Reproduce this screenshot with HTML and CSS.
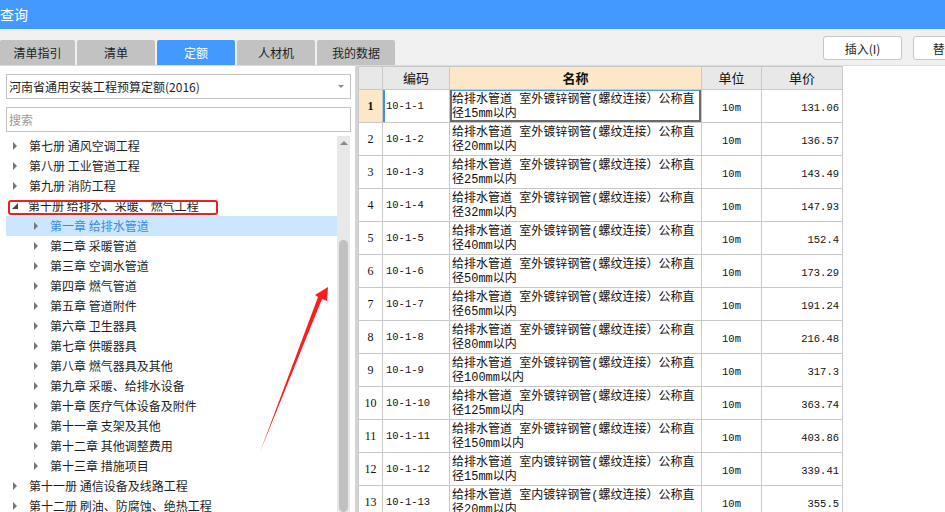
FILE: index.html
```html
<!DOCTYPE html>
<html lang="zh-CN">
<head>
<meta charset="utf-8">
<title>查询</title>
<link rel="stylesheet" href="styles.css">
</head>
<body>
<div class="app">
  <div class="titlebar">查询</div>
  <div class="toolbar">
    <div class="tabs">
      <div class="tab tab-first">清单指引</div>
      <div class="tab">清单</div>
      <div class="tab active">定额</div>
      <div class="tab">人材机</div>
      <div class="tab">我的数据</div>
    </div>
    <div class="actions">
      <button class="btn">插入(I)</button>
      <button class="btn">替换(R)</button>
    </div>
  </div>
  <div class="main">
    <div class="left">
      <div class="select">河南省通用安装工程预算定额(2016)<span class="caret"></span></div>
      <div class="search">搜索</div>
      <div class="treewrap">
        <ul class="tree">
          <li class="node"><span class="tri"></span>第七册 通风空调工程</li>
          <li class="node"><span class="tri"></span>第八册 工业管道工程</li>
          <li class="node"><span class="tri"></span>第九册 消防工程</li>
          <li class="node"><span class="tri open"></span>第十册 给排水、采暖、燃气工程</li>
          <li class="node sub selected"><span class="tri"></span>第一章 给排水管道</li>
          <li class="node sub"><span class="tri"></span>第二章 采暖管道</li>
          <li class="node sub"><span class="tri"></span>第三章 空调水管道</li>
          <li class="node sub"><span class="tri"></span>第四章 燃气管道</li>
          <li class="node sub"><span class="tri"></span>第五章 管道附件</li>
          <li class="node sub"><span class="tri"></span>第六章 卫生器具</li>
          <li class="node sub"><span class="tri"></span>第七章 供暖器具</li>
          <li class="node sub"><span class="tri"></span>第八章 燃气器具及其他</li>
          <li class="node sub"><span class="tri"></span>第九章 采暖、给排水设备</li>
          <li class="node sub"><span class="tri"></span>第十章 医疗气体设备及附件</li>
          <li class="node sub"><span class="tri"></span>第十一章 支架及其他</li>
          <li class="node sub"><span class="tri"></span>第十二章 其他调整费用</li>
          <li class="node sub"><span class="tri"></span>第十三章 措施项目</li>
          <li class="node"><span class="tri"></span>第十一册 通信设备及线路工程</li>
          <li class="node"><span class="tri"></span>第十二册 刷油、防腐蚀、绝热工程</li>
        </ul>
        <div class="vscroll"><span class="up"></span><span class="thumb"></span></div>
      </div>
    </div>
    <div class="splitter"></div>
    <div class="gridwrap">
      <table class="grid">
        <thead>
          <tr>
            <th class="c-no"></th>
            <th class="c-code">编码</th>
            <th class="c-name hl">名称</th>
            <th class="c-unit">单位</th>
            <th class="c-price">单价</th>
          </tr>
        </thead>
        <tbody>
          <tr class="cur"><td class="no">1</td><td class="code">10-1-1</td><td class="name">给排水管道 室外镀锌钢管(螺纹连接）公称直<br>径15mm以内</td><td class="unit">10m</td><td class="price">131.06</td></tr>
          <tr><td class="no">2</td><td class="code">10-1-2</td><td class="name">给排水管道 室外镀锌钢管(螺纹连接）公称直<br>径20mm以内</td><td class="unit">10m</td><td class="price">136.57</td></tr>
          <tr><td class="no">3</td><td class="code">10-1-3</td><td class="name">给排水管道 室外镀锌钢管(螺纹连接）公称直<br>径25mm以内</td><td class="unit">10m</td><td class="price">143.49</td></tr>
          <tr><td class="no">4</td><td class="code">10-1-4</td><td class="name">给排水管道 室外镀锌钢管(螺纹连接）公称直<br>径32mm以内</td><td class="unit">10m</td><td class="price">147.93</td></tr>
          <tr><td class="no">5</td><td class="code">10-1-5</td><td class="name">给排水管道 室外镀锌钢管(螺纹连接）公称直<br>径40mm以内</td><td class="unit">10m</td><td class="price">152.4</td></tr>
          <tr><td class="no">6</td><td class="code">10-1-6</td><td class="name">给排水管道 室外镀锌钢管(螺纹连接）公称直<br>径50mm以内</td><td class="unit">10m</td><td class="price">173.29</td></tr>
          <tr><td class="no">7</td><td class="code">10-1-7</td><td class="name">给排水管道 室外镀锌钢管(螺纹连接）公称直<br>径65mm以内</td><td class="unit">10m</td><td class="price">191.24</td></tr>
          <tr><td class="no">8</td><td class="code">10-1-8</td><td class="name">给排水管道 室外镀锌钢管(螺纹连接）公称直<br>径80mm以内</td><td class="unit">10m</td><td class="price">216.48</td></tr>
          <tr><td class="no">9</td><td class="code">10-1-9</td><td class="name">给排水管道 室外镀锌钢管(螺纹连接）公称直<br>径100mm以内</td><td class="unit">10m</td><td class="price">317.3</td></tr>
          <tr><td class="no">10</td><td class="code">10-1-10</td><td class="name">给排水管道 室外镀锌钢管(螺纹连接）公称直<br>径125mm以内</td><td class="unit">10m</td><td class="price">363.74</td></tr>
          <tr><td class="no">11</td><td class="code">10-1-11</td><td class="name">给排水管道 室外镀锌钢管(螺纹连接）公称直<br>径150mm以内</td><td class="unit">10m</td><td class="price">403.86</td></tr>
          <tr><td class="no">12</td><td class="code">10-1-12</td><td class="name">给排水管道 室内镀锌钢管(螺纹连接）公称直<br>径15mm以内</td><td class="unit">10m</td><td class="price">339.41</td></tr>
          <tr><td class="no">13</td><td class="code">10-1-13</td><td class="name">给排水管道 室内镀锌钢管(螺纹连接）公称直<br>径20mm以内</td><td class="unit">10m</td><td class="price">355.5</td></tr>
        </tbody>
      </table>
    </div>
  </div>
  <div class="redbox"></div>
  <svg class="annot" width="945" height="512" viewBox="0 0 945 512">
    <polygon points="260,452 318,297 315,295 328,287 327,301 322,299" fill="#ff1c1c"/>
  </svg>
</div>
</body>
</html>
```

FILE: styles.css
```css
* { box-sizing: border-box; }
html, body { margin: 0; padding: 0; }
body {
  width: 945px;
  height: 512px;
  overflow: hidden;
  background: #ffffff;
  font-family: "Noto Sans CJK SC", "Noto Sans", sans-serif;
  font-size: 12px;
  color: #1e1e1e;
}
.app {
  position: relative;
  width: 945px;
  height: 512px;
  overflow: hidden;
  display: flex;
  flex-direction: column;
}
.titlebar {
  height: 29px;
  line-height: 29px;
  background: #4399ff;
  color: #ffffff;
  font-size: 14px;
  padding-left: 0;
  flex-shrink: 0;
}
.toolbar {
  height: 36px;
  background: #f0f0f0;
  display: flex;
  flex-shrink: 0;
  overflow: hidden;
}
.tabs {
  display: flex;
  align-items: flex-end;
  gap: 2px;
  padding-top: 11px;
  flex-shrink: 0;
}
.tab {
  width: 78px;
  height: 25px;
  line-height: 25px;
  text-align: center;
  background: #c2c2c2;
  color: #1e1e1e;
  font-size: 12px;
  border-radius: 2px 2px 0 0;
}
.tab-first { width: 75px; }
.tab.active { background: #4399ff; color: #ffffff; }
.actions {
  display: flex;
  gap: 11px;
  margin-left: 428px;
  padding-top: 7px;
  flex-shrink: 0;
}
.btn {
  width: 79px;
  height: 24px;
  padding: 0;
  background: #ffffff;
  border: 1px solid #c6c6c6;
  border-radius: 3px;
  font-family: "Noto Sans CJK SC", sans-serif;
  font-size: 12px;
  color: #1e1e1e;
  flex-shrink: 0;
}
.main {
  flex: 1;
  display: flex;
  border-top: 1px solid #dadada;
  min-height: 0;
  overflow: hidden;
}
.left {
  width: 355px;
  flex-shrink: 0;
  padding: 8px 0 0 6px;
  background: #ffffff;
  display: flex;
  flex-direction: column;
}
.select {
  position: relative;
  width: 345px;
  height: 25px;
  line-height: 23px;
  border: 1px solid #c4c4c4;
  padding-left: 2px;
  font-size: 12px;
  color: #1e1e1e;
  flex-shrink: 0;
}
.caret {
  position: absolute;
  right: 6px;
  top: 10px;
  width: 0;
  height: 0;
  border-left: 3px solid transparent;
  border-right: 3px solid transparent;
  border-top: 3px solid #8a8a8a;
}
.search {
  width: 345px;
  height: 25px;
  line-height: 23px;
  border: 1px solid #c4c4c4;
  padding-left: 2px;
  margin-top: 8px;
  color: #9a9a9a;
  font-size: 12px;
  flex-shrink: 0;
}
.treewrap {
  display: flex;
  margin-top: 4px;
  flex: 1;
  min-height: 0;
}
.tree {
  list-style: none;
  margin: 0;
  padding: 0;
  width: 331px;
  flex-shrink: 0;
}
.node {
  height: 20px;
  line-height: 20px;
  display: flex;
  align-items: center;
  padding-left: 7px;
  white-space: nowrap;
  color: #1e1e1e;
}
.node.sub { padding-left: 28px; }
.node.selected { background: #cce6fd; color: #3a8ae6; }
.tri {
  width: 0;
  height: 0;
  border-top: 4px solid transparent;
  border-bottom: 4px solid transparent;
  border-left: 4px solid #777777;
  margin-right: 12px;
  flex-shrink: 0;
}
.tri.open {
  border-top: 0;
  border-left: 6px solid transparent;
  border-bottom: 6px solid #444444;
  margin-right: 10px;
  margin-left: -1px;
}
.vscroll {
  width: 13px;
  background: #e8e8e8;
  display: flex;
  flex-direction: column;
  align-items: center;
  flex-shrink: 0;
}
.up {
  margin-top: 5px;
  width: 0;
  height: 0;
  border-left: 4px solid transparent;
  border-right: 4px solid transparent;
  border-bottom: 4px solid #8a8a8a;
}
.thumb {
  margin-top: 95px;
  width: 9px;
  height: 290px;
  background: #c1c1c1;
  border-radius: 5px;
}
.splitter {
  width: 3px;
  background: #d4d4d4;
  flex-shrink: 0;
}
.gridwrap {
  flex: 1;
  background: #ffffff;
}
.grid {
  border-collapse: collapse;
  table-layout: fixed;
  font-family: "Liberation Mono", "Noto Sans CJK SC", monospace;
  font-size: 12px;
  color: #111111;
}
.grid th, .grid td {
  border: 1px solid #c8c8c8;
  padding: 0;
}
.grid th {
  height: 23px;
  background: #e8e8e8;
  font-family: "Noto Sans CJK SC", sans-serif;
  font-weight: normal;
  font-size: 13px;
  line-height: 20px;
  text-align: center;
}
.grid th.hl { background: #fde7c9; font-weight: bold; }
.c-no { width: 24px; }
.c-code { width: 67px; }
.c-name { width: 252px; }
.c-unit { width: 60px; }
.c-price { width: 81px; }
.grid td { height: 33px; vertical-align: middle; }
.grid td.no {
  text-align: center;
  font-family: "Liberation Serif", serif;
  font-size: 12px;
}
.grid td.code { padding-left: 3px; font-size: 10.5px; }
.grid td.name {
  vertical-align: top;
  padding: 3px 0 0 2px;
  line-height: 14px;
  white-space: nowrap;
  overflow: hidden;
}
.grid td.unit { text-align: center; font-size: 10.5px; padding-top: 4px; }
.grid td.price { text-align: right; padding-right: 3px; padding-top: 4px; font-size: 10.5px; }
.grid tr.cur td.no { background: #fde7c9; font-weight: bold; }
.grid tr.cur td.code { box-shadow: inset 2px 0 0 #3d8ef0; }
.grid tr.cur td.name {
  box-shadow: inset 2px 0 0 #6b6b6b, inset -2px 0 0 #6b6b6b, inset 0 -2px 0 #6b6b6b, inset 0 1px 0 #4a9cf5;
}
.redbox {
  position: absolute;
  left: 8px;
  top: 200px;
  width: 210px;
  height: 15px;
  border: 2px solid #e8231e;
  border-radius: 3px;
}
.annot {
  position: absolute;
  left: 0;
  top: 0;
  pointer-events: none;
}
```
